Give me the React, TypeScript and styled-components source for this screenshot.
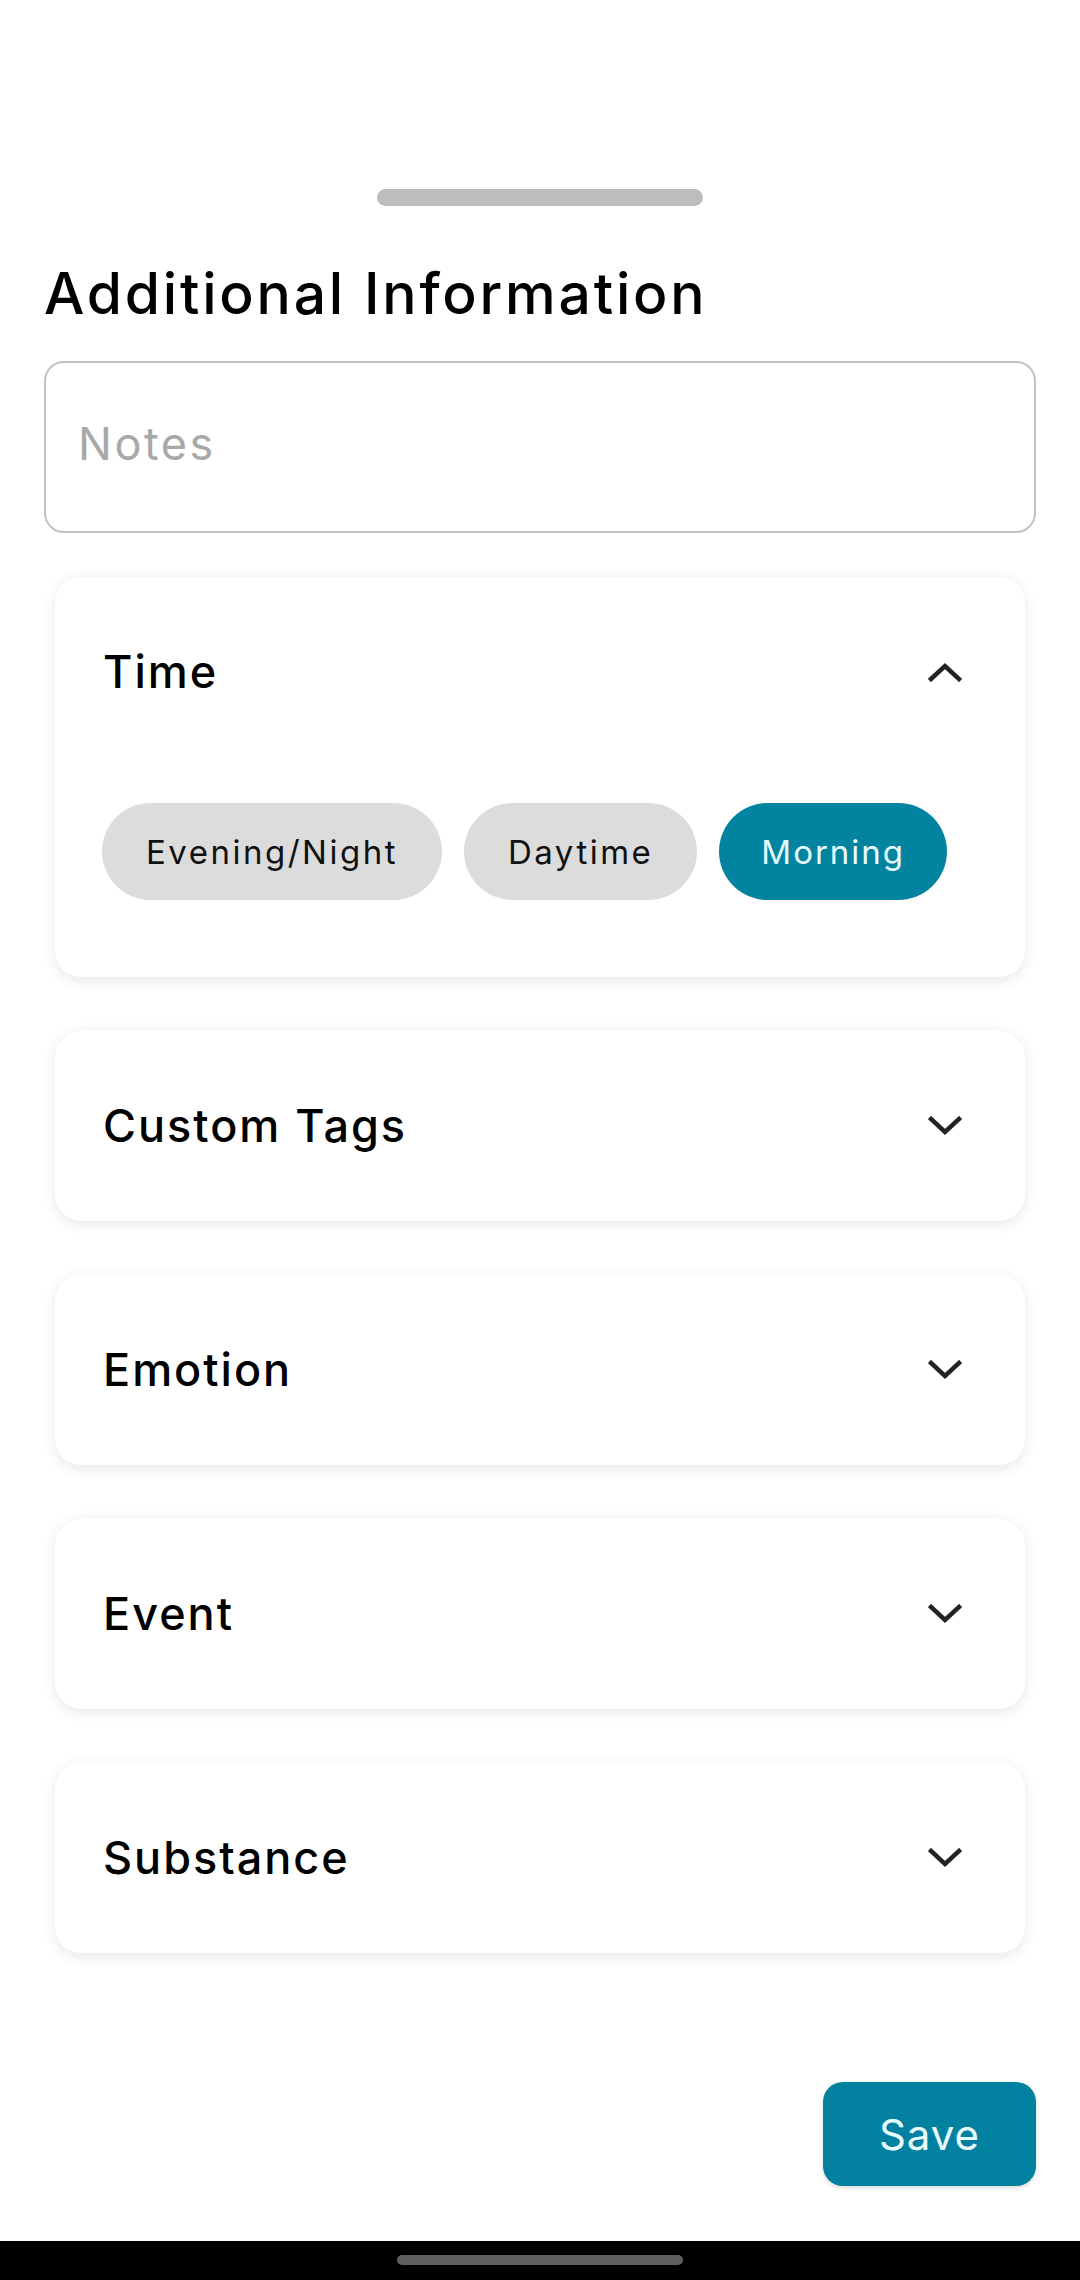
import { useState } from 'react';
import styled, { createGlobalStyle, css } from 'styled-components';

const GlobalStyle = createGlobalStyle`
  html, body {
    margin: 0;
    padding: 0;
    background: #ffffff;
  }
  * {
    box-sizing: border-box;
  }
`;

const sections = ['Custom Tags', 'Emotion', 'Event', 'Substance'];
const times = ['Evening/Night', 'Daytime', 'Morning'];

function Chevron({ up }: { up?: boolean }) {
  return (
    <svg width="34" height="20" viewBox="0 0 34 20" fill="none">
      <path
        d={up ? 'M3 17 L17 4 L31 17' : 'M3 3 L17 16 L31 3'}
        stroke="#222222"
        strokeWidth="4.5"
        strokeLinecap="square"
        strokeLinejoin="miter"
      />
    </svg>
  );
}

export default function App() {
  const [time, setTime] = useState('Morning');
  const [open, setOpen] = useState('Time');

  return (
    <Page>
      <GlobalStyle />
      <Sheet>
        <Handle />
        <Title>Additional Information</Title>
        <NotesBox placeholder="Notes" />
        <CardList>
          <Card>
            <CardHeader onClick={() => setOpen(open === 'Time' ? '' : 'Time')}>
              <CardTitle>Time</CardTitle>
              <Chevron up={open === 'Time'} />
            </CardHeader>
            {open === 'Time' && (
              <ChipRow>
                {times.map((t) => (
                  <Chip key={t} selected={t === time} onClick={() => setTime(t)}>
                    {t}
                  </Chip>
                ))}
              </ChipRow>
            )}
          </Card>
          {sections.map((s) => (
            <Card key={s}>
              <CardHeader onClick={() => setOpen(open === s ? '' : s)}>
                <CardTitle>{s}</CardTitle>
                <Chevron up={open === s} />
              </CardHeader>
            </Card>
          ))}
        </CardList>
      </Sheet>
      <Footer>
        <SaveButton>Save</SaveButton>
      </Footer>
      <NavBar>
        <HomeIndicator />
      </NavBar>
    </Page>
  );
}

const Page = styled.div`
  width: 1080px;
  height: 2280px;
  display: flex;
  flex-direction: column;
  background: #ffffff;
  font-family: Inter, 'Liberation Sans', sans-serif;
  color: #000000;
  overflow: hidden;
`;

const Sheet = styled.div`
  padding: 189px 44px 0;
  display: flex;
  flex-direction: column;
`;

const Handle = styled.div`
  align-self: center;
  width: 326px;
  height: 17px;
  border-radius: 9px;
  background: #bdbdbd;
`;

const Title = styled.h1`
  margin: 54px 0 0;
  font-size: 57px;
  font-weight: 500;
  line-height: 68px;
  letter-spacing: 2.8px;
`;

const NotesBox = styled.textarea`
  margin-top: 33px;
  width: 100%;
  height: 172px;
  border: 2px solid #c2c2c2;
  border-radius: 20px;
  padding: 53px 32px 0;
  font-family: Inter, 'Liberation Sans', sans-serif;
  font-size: 45px;
  line-height: 56px;
  letter-spacing: 2.5px;
  resize: none;
  outline: none;

  &::placeholder {
    color: #a8a8a8;
  }
`;

const CardList = styled.div`
  margin-top: 44px;
  padding: 0 11px;
  display: flex;
  flex-direction: column;
  gap: 54px;
`;

const Card = styled.div`
  background: #ffffff;
  border-radius: 26px;
  box-shadow: 0 3px 14px rgba(0, 0, 0, 0.1);
  display: flex;
  flex-direction: column;
`;

const CardHeader = styled.div`
  height: 190px;
  padding: 0 63px 0 48px;
  display: flex;
  align-items: center;
  justify-content: space-between;
  cursor: pointer;
`;

const CardTitle = styled.div`
  font-size: 45px;
  font-weight: 500;
  line-height: 56px;
  letter-spacing: 2px;
`;

const ChipRow = styled.div`
  margin-top: 36px;
  padding: 0 47px 77px;
  display: flex;
  gap: 22px;
`;

const Chip = styled.div<{ selected?: boolean }>`
  ${({ selected }) => css`
    height: 97px;
    padding: 0 ${selected ? 42 : 44}px;
    border-radius: 49px;
    display: flex;
    align-items: center;
    justify-content: center;
    font-size: 33px;
    font-weight: 400;
    letter-spacing: ${selected ? 2 : 2.5}px;
    background: ${selected ? '#0284a0' : '#dcdcdc'};
    color: ${selected ? '#e4fbff' : '#111111'};
    cursor: pointer;
  `}
`;

const Footer = styled.div`
  margin-top: auto;
  padding: 0 44px 55px;
  display: flex;
  justify-content: flex-end;
`;

const SaveButton = styled.button`
  width: 213px;
  height: 104px;
  border: none;
  border-radius: 20px;
  background: #0280a0;
  color: #e8fbff;
  font-family: Inter, 'Liberation Sans', sans-serif;
  font-size: 42px;
  font-weight: 400;
  letter-spacing: 1px;
  box-shadow: 0 2px 4px rgba(0, 0, 0, 0.15);
  cursor: pointer;
`;

const NavBar = styled.div`
  height: 39px;
  background: #000000;
  display: flex;
  justify-content: center;
  padding-top: 14px;
`;

const HomeIndicator = styled.div`
  width: 286px;
  height: 10px;
  border-radius: 5px;
  background: #5f5f5f;
`;
